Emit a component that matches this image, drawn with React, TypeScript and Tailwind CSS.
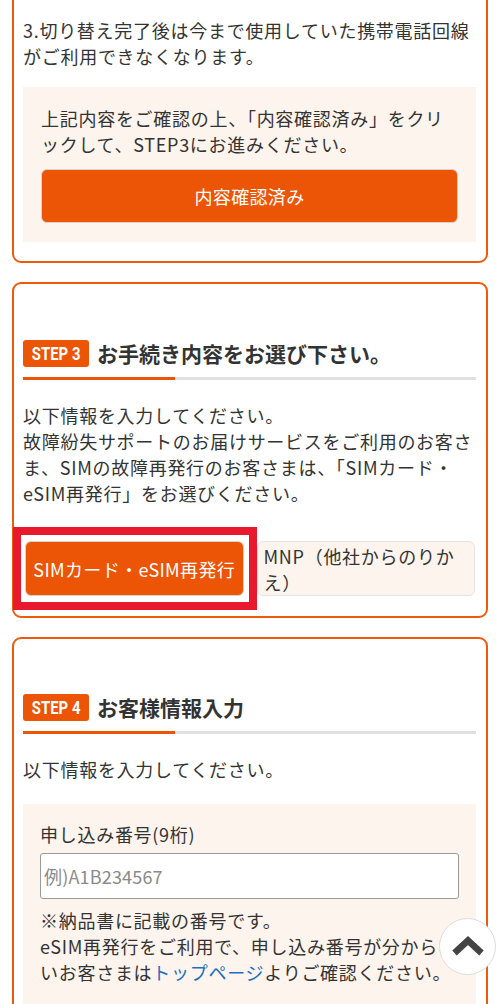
import React from "react";

const font = "font-['Noto_Sans_CJK_JP','Noto_Sans',sans-serif]";

function StepHeading({ n, title }: { n: string; title: string }) {
  return (
    <div>
      <div className="flex items-center gap-[8px] h-[27px]">
        <div className="w-[66px] h-[27px] rounded-[3px] bg-[#eb5505] flex items-center justify-center">
          <span className="inline-block scale-x-[0.78] font-['Roboto',sans-serif] font-bold text-[19px] leading-none text-white tracking-[0px]">
            STEP<span className="ml-[5px]">{n}</span>
          </span>
        </div>
        <div className="text-[21px] font-bold tracking-[0px] text-[#333] leading-[27px]">{title}</div>
      </div>
      <div className="flex mt-[10px] h-[3px]">
        <div className="w-[152px] bg-[#eb5505]" />
        <div className="flex-1 bg-[#e0e0e0]" />
      </div>
    </div>
  );
}

export default function App() {
  return (
    <div className={`${font} bg-white min-h-[1004px] text-[#333] text-[18px] leading-[26px] tracking-[0.04em] overflow-hidden`}>
      <div className="mx-[12px] -mt-[38px] border-2 border-[#ee5a0c] rounded-[9px] pl-[9px] pr-[10px] pt-[9px] pb-[19px]">
        <p className="text-[#e8192c]">切り替え前にご確認ください。</p>
        <p className="mt-[18px]">3.切り替え完了後は今まで使用していた携帯電話回線がご利用できなくなります。</p>
        <div className="mt-[18px] bg-[#fdf4ee] px-[18px] pt-[18px] pb-[19px]">
          <p>上記内容をご確認の上、「内容確認済み」をクリックして、STEP3にお進みください。</p>
          <button className="mt-[12px] w-full h-[54px] rounded-[6px] bg-[#eb5505] border border-[#d9d0cc] text-white text-[18px] tracking-[0.02em]">
            内容確認済み
          </button>
        </div>
      </div>

      <div className="mx-[12px] mt-[19px] border-2 border-[#ee5a0c] rounded-[9px] pl-[9px] pr-[10px] pt-[56px] pb-[20px]">
        <StepHeading n="3" title="お手続き内容をお選び下さい。" />
        <p className="mt-[22px]">
          以下情報を入力してください。
          <br />
          故障紛失サポートのお届けサービスをご利用のお客さま、SIMの故障再発行のお客さまは、「SIMカード・eSIM再発行」をお選びください。
        </p>
        <div className="relative mt-[35px] grid grid-cols-2 gap-[13px] pl-[2px] pr-[1px]">
          <button className="min-w-0 h-[55px] p-0 rounded-[6px] bg-[#eb5505] border border-[#d9d0cc] text-white text-[18px] tracking-[0.02em] whitespace-nowrap">
            SIMカード・eSIM再発行
          </button>
          <button className="min-w-0 h-[55px] rounded-[6px] bg-[#fdf4ee] border-[1.5px] border-[#e6e2e0] text-left pl-[6px] pr-[4px] pt-[1px] pb-0 text-[18px] leading-[26px] tracking-[0.04em] text-[#333]">
            MNP（他社からのりかえ）
          </button>
          <div className="absolute left-[-10px] top-[-14px] w-[244px] h-[83px] border-[8px] border-[#e8192c] pointer-events-none" />
        </div>
      </div>

      <div className="mx-[12px] mt-[19px] border-2 border-[#ee5a0c] rounded-[9px] pl-[9px] pr-[10px] pt-[55px] pb-[20px]">
        <StepHeading n="4" title="お客様情報入力" />
        <p className="mt-[22px]">以下情報を入力してください。</p>
        <div className="mt-[22px] bg-[#fdf4ee] px-[17px] pt-[17px] pb-[30px]">
          <p>申し込み番号(9桁)</p>
          <input
            className="mt-[6px] w-full h-[46px] bg-white border border-[#999] rounded-[3px] px-[3px] text-[18px] tracking-[0.01em] placeholder:text-[#8a8a8a] outline-none"
            placeholder="例)A1B234567"
          />
          <p className="mt-[8px]">
            ※納品書に記載の番号です。
            <br />
            eSIM再発行をご利用で、申し込み番号が分からないお客さまは<span className="text-[#1d6fc0]">トップページ</span>よりご確認ください。
          </p>
          <div className="h-[80px]" />
        </div>
      </div>

      <button className="fixed right-[4px] bottom-[29px] w-[57px] h-[57px] rounded-full bg-white border border-[#dcdcdc] flex items-center justify-center">
        <svg width="34" height="22" viewBox="0 0 34 22">
          <path d="M3.5 17 L17 4.5 L30.5 17" fill="none" stroke="#444" strokeWidth="6.5" strokeLinejoin="miter" />
        </svg>
      </button>
    </div>
  );
}
